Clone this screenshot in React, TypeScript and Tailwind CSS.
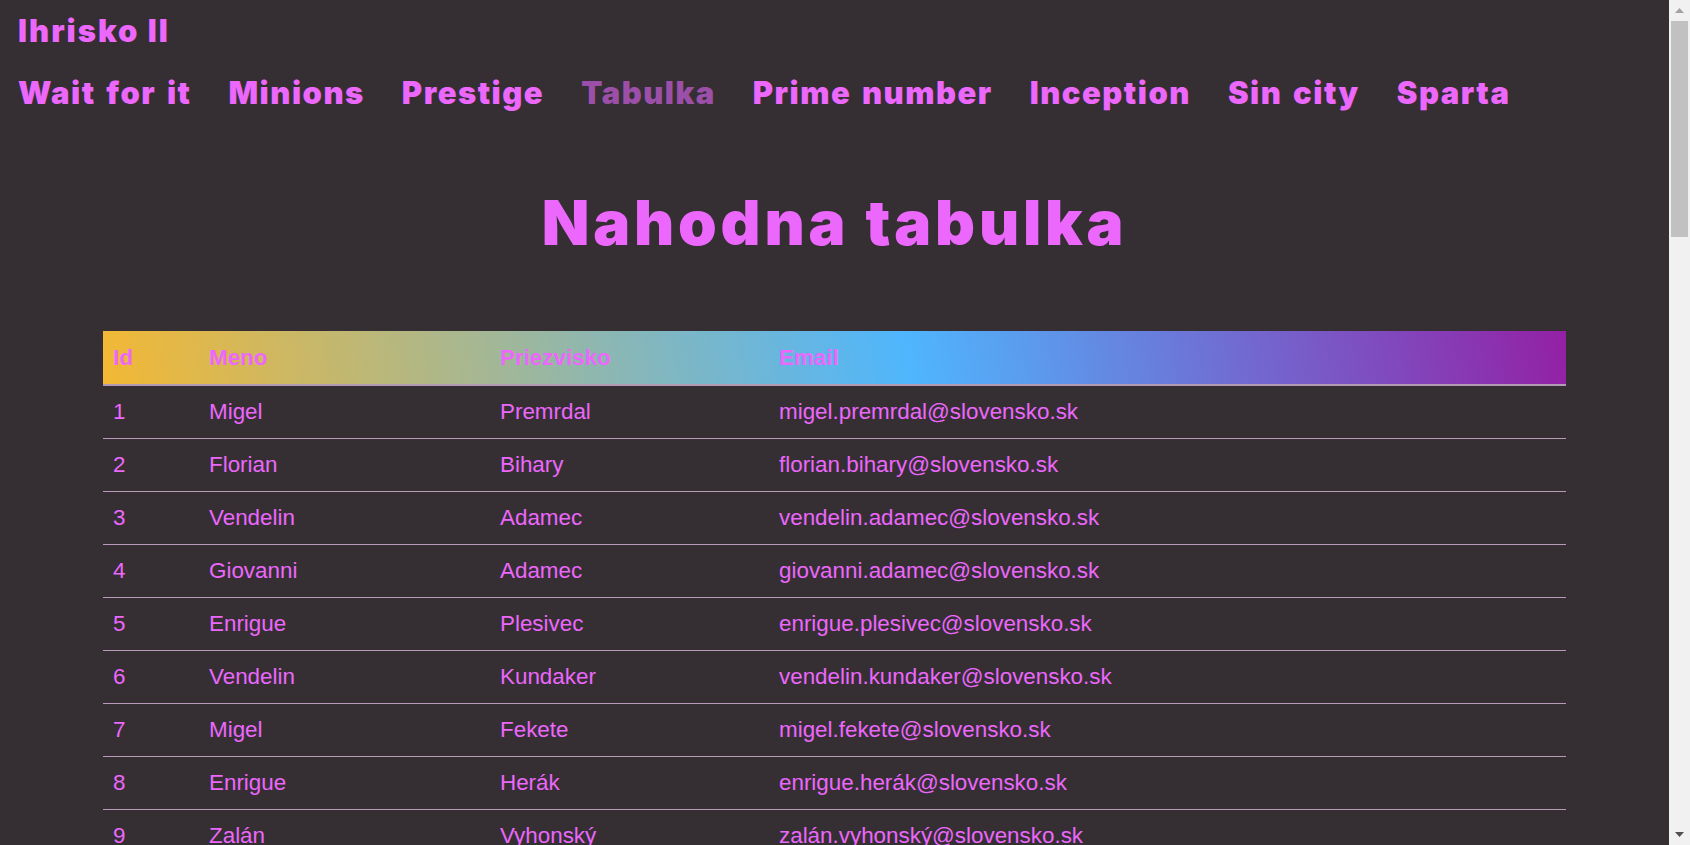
import React from "react";

const firstNames = ["Migel", "Florian", "Vendelin", "Giovanni", "Enrigue", "Zalán"];
const lastNames = ["Premrdal", "Bihary", "Adamec", "Plesivec", "Kundaker", "Fekete", "Herák", "Vyhonský"];

const fixed: [string, string][] = [
  ["Migel", "Premrdal"],
  ["Florian", "Bihary"],
  ["Vendelin", "Adamec"],
  ["Giovanni", "Adamec"],
  ["Enrigue", "Plesivec"],
  ["Vendelin", "Kundaker"],
  ["Migel", "Fekete"],
  ["Enrigue", "Herák"],
  ["Zalán", "Vyhonský"],
];

function buildRows() {
  const rows: { id: number; first: string; last: string }[] = [];
  let seed = 12345;
  const rnd = () => {
    seed = (seed * 1103515245 + 12345) % 2147483648;
    return seed / 2147483648;
  };
  for (let i = 0; i < 52; i++) {
    let first: string;
    let last: string;
    if (i < fixed.length) {
      [first, last] = fixed[i];
    } else {
      first = firstNames[Math.floor(rnd() * firstNames.length)];
      last = lastNames[Math.floor(rnd() * lastNames.length)];
    }
    rows.push({ id: i + 1, first, last });
  }
  return rows;
}

const rows = buildRows();
const nav = ["Wait for it", "Minions", "Prestige", "Tabulka", "Prime number", "Inception", "Sin city", "Sparta"];

function Scrollbar() {
  return (
    <aside className="flex h-full w-[21px] shrink-0 flex-col bg-[#f1f1f1]">
      <div className="flex h-[21px] items-center justify-center">
        <svg width="9" height="5" viewBox="0 0 9 5">
          <polygon points="4.5,0 9,5 0,5" fill="#a3a3a3" />
        </svg>
      </div>
      <div className="mx-[2px] h-[216px] bg-[#c1c1c1]" />
      <div className="flex-1" />
      <div className="flex h-[21px] items-center justify-center">
        <svg width="9" height="5" viewBox="0 0 9 5">
          <polygon points="0,0 9,0 4.5,5" fill="#505050" />
        </svg>
      </div>
    </aside>
  );
}

export default function App() {
  return (
    <div className="flex h-screen bg-[#352f34] text-[#ec67fb]">
      <main className="h-full min-w-0 flex-1 overflow-hidden">
        <header className="px-[18px] pt-[11px] font-['Inter','Noto_Sans',sans-serif] font-black">
          <div className="text-[31px] leading-[40px] tracking-[2px]">Ihrisko II</div>
          <nav className="mt-[22px] flex gap-[37px] text-[31px] leading-[40px] tracking-[1.5px] [word-spacing:3px]">
            {nav.map((n) => (
              <a key={n} className={n === "Tabulka" ? "text-[#9c4fa8]" : "text-[#ec67fb]"}>
                {n}
              </a>
            ))}
          </nav>
        </header>
        <h1 className="mt-[72px] text-center font-['Inter','Noto_Sans',sans-serif] font-black text-[62px] leading-[76px] tracking-[3.8px]">
          Nahodna tabulka
        </h1>
        <table className="mt-[70px] mb-[32px] ml-[103px] w-[1463px] table-fixed border-collapse font-['Liberation_Sans',Arial,sans-serif] text-[22.4px]">
          <colgroup>
            <col className="w-[96px]" />
            <col className="w-[291px]" />
            <col className="w-[279px]" />
            <col />
          </colgroup>
          <thead>
            <tr className="h-[54px] border-b-2 border-[#b39bb5] bg-[linear-gradient(80deg,#f3b834_0%,#4fb6fd_55%,#9320a5_100%)]">
              <th className="px-[10px] text-left font-bold">Id</th>
              <th className="px-[10px] text-left font-bold">Meno</th>
              <th className="px-[10px] text-left font-bold">Priezvisko</th>
              <th className="px-[10px] text-left font-bold">Email</th>
            </tr>
          </thead>
          <tbody>
            {rows.map((r) => (
              <tr key={r.id} className="h-[53px] border-b border-[#b89bb9]">
                <td className="px-[10px]">{r.id}</td>
                <td className="px-[10px]">{r.first}</td>
                <td className="px-[10px]">{r.last}</td>
                <td className="px-[10px]">
                  {r.first.toLowerCase()}.{r.last.toLowerCase()}@slovensko.sk
                </td>
              </tr>
            ))}
          </tbody>
        </table>
      </main>
      <Scrollbar />
    </div>
  );
}
